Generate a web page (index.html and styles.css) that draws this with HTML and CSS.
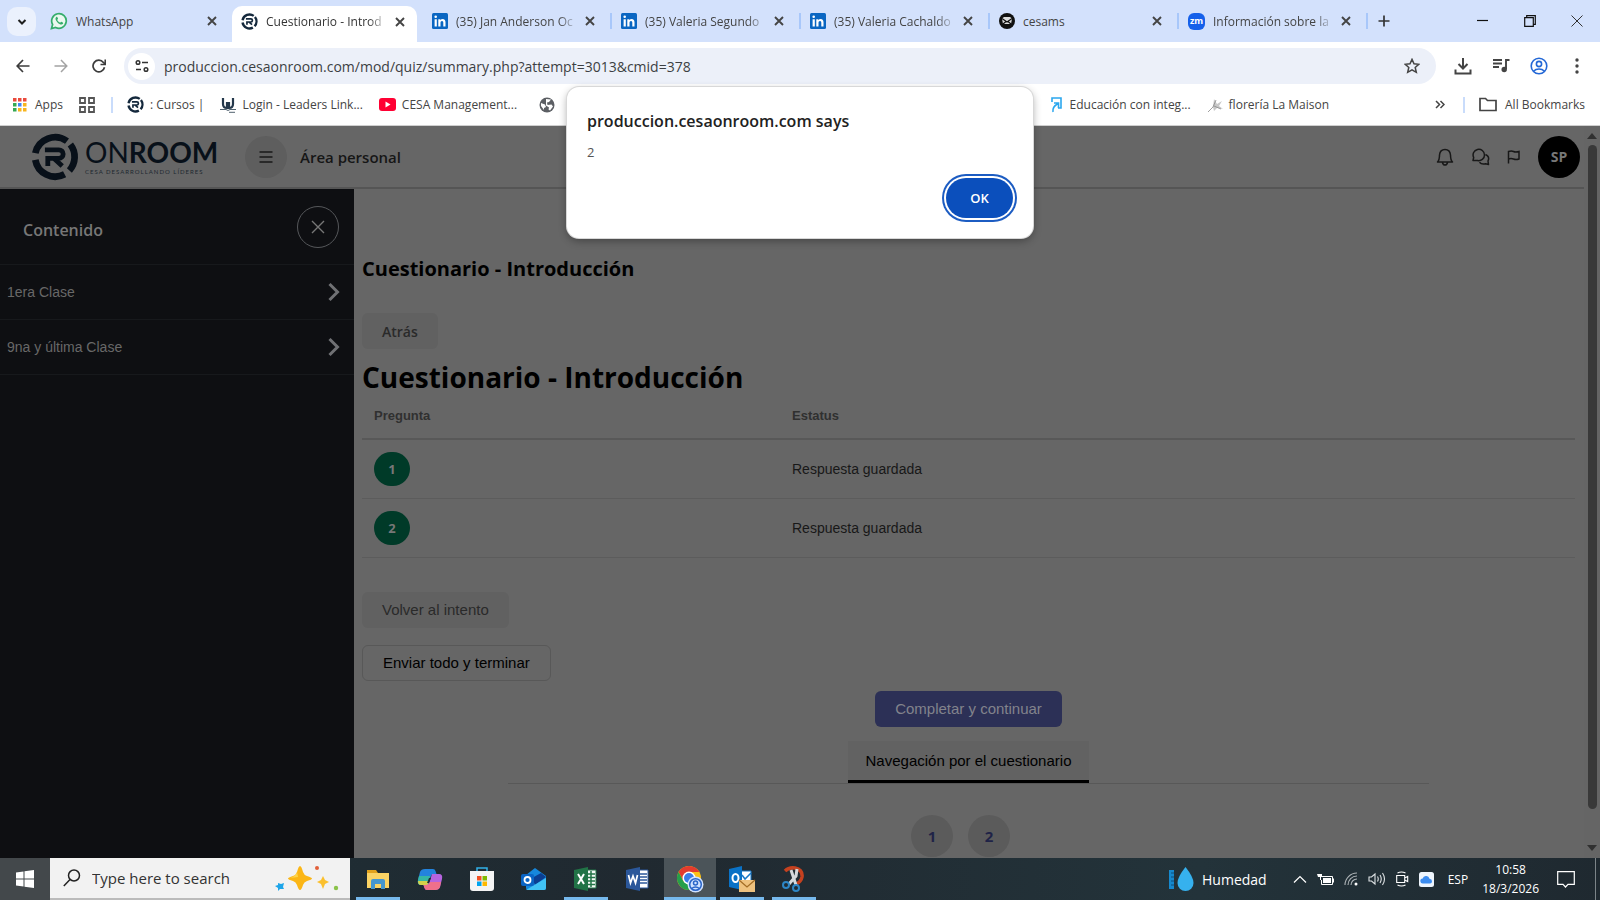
FILE: index.html
```html
<!DOCTYPE html>
<html lang="es">
<head>
<meta charset="utf-8">
<title>Cuestionario - Introducción</title>
<link rel="stylesheet" href="styles.css">
</head>
<body>
<svg class="defs" aria-hidden="true">
  <symbol id="close" viewBox="0 0 16 16"><path d="M4 4l8 8M12 4l-8 8" fill="none" stroke="currentColor" stroke-width="1.9"/></symbol>
  <symbol id="linkedin" viewBox="0 0 16 16"><rect width="16" height="16" rx="1.5" fill="#0a66c2"/><path d="M2.6 6.2h2.2v7.2H2.6zM3.7 2.4a1.3 1.3 0 1 1 0 2.6 1.3 1.3 0 0 1 0-2.6zM6.3 6.2h2.1v1c.5-.8 1.2-1.2 2.2-1.2 2.100 0 2.900 1.300 2.900 3.300v4.100h-2.200V9.700c0-1-.3-1.800-1.300-1.800s-1.500.7-1.500 1.800v3.700H6.300z" fill="#fff"/></symbol>
  <symbol id="onroom" viewBox="0 0 50 50"><g fill="none" stroke="currentColor"><path d="M4.500 21A21 21 0 0 1 37.500 8.500" stroke-width="7"/><path d="M4.500 28A21 21 0 0 0 35 43" stroke-width="7"/><path d="M41 12A21 21 0 0 1 40 39" stroke-width="7"/><path d="M14.500 17.500H29a4.500 4.500 0 0 1 0 9H17.500v8M24 26.500l8.500 8" stroke-width="5"/></g></symbol>
  <symbol id="chevron" viewBox="0 0 14 20"><path d="M2.500 2l8 8-8 8" fill="none" stroke="currentColor" stroke-width="3"/></symbol>
</svg>

<div class="screen">
  <header class="browser">
    <div class="tabstrip">
      <button class="tab-search" aria-label="Search tabs"><svg width="12" height="12" viewBox="0 0 12 12"><path d="M2.500 4l3.500 3.500L9.500 4" fill="none" stroke="#1f1f1f" stroke-width="2"/></svg></button>
      <div class="tab first">
        <svg width="18" height="18" viewBox="0 0 18 18"><path d="M1.500 16.500l1.100-4A7.300 7.300 0 1 1 5.600 15.400z" fill="#eaf8ef" stroke="#35ad6c" stroke-width="1.700"/><path d="M6.300 4.900c-1.500 1-.9 3.300 1.200 5.500 2.200 2.200 4.400 2.800 5.500 1.300.5-.8 0-1.200-1.600-1.900-.6-.2-.8.9-1.300.8C9 10.300 7.500 8.800 7.300 7.900c-.1-.4.900-.7.700-1.300-.6-1.600-1-2.100-1.700-1.700z" fill="#35ad6c"/></svg>
        <span class="tab-title">WhatsApp</span><button class="tab-close" aria-label="Close"><svg width="16" height="16"><use href="#close"/></svg></button>
      </div>
      <div class="tab active">
        <svg class="navy" width="17" height="17"><use href="#onroom"/></svg>
        <span class="tab-title faded">Cuestionario - Introd</span><button class="tab-close" aria-label="Close"><svg width="16" height="16"><use href="#close"/></svg></button>
      </div>
      <div class="tab"><svg width="16" height="16"><use href="#linkedin"/></svg><span class="tab-title faded">(35) Jan Anderson Oc</span><button class="tab-close" aria-label="Close"><svg width="16" height="16"><use href="#close"/></svg></button></div>
      <div class="tab sep"><svg width="16" height="16"><use href="#linkedin"/></svg><span class="tab-title faded">(35) Valeria Segundo</span><button class="tab-close" aria-label="Close"><svg width="16" height="16"><use href="#close"/></svg></button></div>
      <div class="tab sep"><svg width="16" height="16"><use href="#linkedin"/></svg><span class="tab-title faded">(35) Valeria Cachaldo</span><button class="tab-close" aria-label="Close"><svg width="16" height="16"><use href="#close"/></svg></button></div>
      <div class="tab sep">
        <svg width="16" height="16" viewBox="0 0 16 16"><circle cx="8" cy="8" r="8" fill="#111"/><path d="M3 5.500l2-1.500h6l2 1.500-1 5.500H4z" fill="#ddd"/><path d="M3 5.500l5 3.500 5-3.500M4 11l3-2.500M12 11L9 8.500" stroke="#111" fill="none" stroke-width="1.200"/></svg>
        <span class="tab-title">cesams</span><button class="tab-close" aria-label="Close"><svg width="16" height="16"><use href="#close"/></svg></button>
      </div>
      <div class="tab sep">
        <span class="zoom-icon">zm</span>
        <span class="tab-title faded">Información sobre la</span><button class="tab-close" aria-label="Close"><svg width="16" height="16"><use href="#close"/></svg></button>
      </div>
      <button class="new-tab sep" aria-label="New tab"><svg width="12" height="12" viewBox="0 0 12 12"><path d="M6 .5v11M.5 6h11" stroke="#333" stroke-width="1.700"/></svg></button>
      <div class="window-controls">
        <button aria-label="Minimize"><svg width="12" height="12" viewBox="0 0 12 12"><path d="M0 5.500h11" stroke="#111" stroke-width="1.200"/></svg></button>
        <button aria-label="Restore"><svg width="12" height="12" viewBox="0 0 12 12"><path d="M.7 2.700h8.600v8.600H.7zM2.700 2.700v-2h8.600v8.600h-2" fill="none" stroke="#111" stroke-width="1.200"/></svg></button>
        <button aria-label="Close window"><svg width="12" height="12" viewBox="0 0 12 12"><path d="M.5.500l11 11M11.500.500l-11 11" stroke="#333" stroke-width="1"/></svg></button>
      </div>
    </div>

    <div class="toolbar">
      <button class="tool" aria-label="Back"><svg width="14" height="14" viewBox="0 0 14 14"><path d="M13.500 7H1.500M7 1L1.200 7 7 13" fill="none" stroke="#3c3c3c" stroke-width="1.700"/></svg></button>
      <button class="tool" aria-label="Forward"><svg width="14" height="14" viewBox="0 0 14 14"><path d="M.5 7h12M7 1l5.800 6L7 13" fill="none" stroke="#a3a3a3" stroke-width="1.500"/></svg></button>
      <button class="tool" aria-label="Reload"><svg width="14" height="14" viewBox="0 0 14 14"><path d="M12.500 8.200A5.800 5.800 0 1 1 11.400 3.400L13 5" fill="none" stroke="#3c3c3c" stroke-width="1.700"/><path d="M13.300.5v5H8.500" fill="none" stroke="#3c3c3c" stroke-width="1.700"/></svg></button>
      <div class="omnibox">
        <button class="site-info" aria-label="Site information"><svg width="14" height="14" viewBox="0 0 14 14"><g fill="none" stroke="#333" stroke-width="1.500"><circle cx="3" cy="3.500" r="1.800"/><path d="M7 3.500h6M1 10.500h5"/><circle cx="11" cy="10.500" r="1.800"/></g></svg></button>
        <input class="url" type="text" aria-label="Address" value="produccion.cesaonroom.com/mod/quiz/summary.php?attempt=3013&amp;cmid=378">
        <button class="star" aria-label="Bookmark"><svg width="16" height="16" viewBox="0 0 16 16"><path d="M8 1.400l2 4.400 4.800.5-3.600 3.200 1.100 4.800L8 11.800l-4.300 2.500 1.100-4.800L1.200 6.300 6 5.800z" fill="none" stroke="#444" stroke-width="1.500"/></svg></button>
      </div>
      <div class="tool-icons">
        <button class="tool" aria-label="Downloads"><svg width="18" height="18" viewBox="0 0 18 18"><path d="M9 1v10M4.500 7L9 11.500 13.500 7M1.500 12.500v4h15v-4" fill="none" stroke="#444" stroke-width="2"/></svg></button>
        <button class="tool" aria-label="Media"><svg width="18" height="18" viewBox="0 0 18 18"><path d="M1 3h9M1 6.500h9M1 10h6M14 12V3h3.500" fill="none" stroke="#444" stroke-width="1.900"/><circle cx="12.200" cy="12.500" r="2.700" fill="#444"/></svg></button>
        <button class="tool" aria-label="Profile"><svg width="18" height="18" viewBox="0 0 18 18"><g fill="none" stroke="#2468d6" stroke-width="1.600"><circle cx="9" cy="9" r="7.800"/><circle cx="9" cy="7" r="2.600"/><path d="M3.500 14.300c3-3 8-3 11 0"/></g></svg></button>
        <button class="tool" aria-label="Menu"><svg width="4" height="16" viewBox="0 0 4 16" fill="#444"><circle cx="2" cy="2" r="1.700"/><circle cx="2" cy="8" r="1.700"/><circle cx="2" cy="14" r="1.700"/></svg></button>
      </div>
    </div>

    <nav class="bookmarks">
      <div class="marks-left">
        <a href="#" class="mark"><svg width="14" height="14" viewBox="0 0 14 14"><path d="M0 0h3.500v3.500H0zM5 0h3.500v3.500H5zM10 0h3.500v3.500H10z" fill="#ea4a3c"/><path d="M0 5h3.500v3.500H0zM0 10h3.500v3.500H0z" fill="#35a853"/><path d="M5 5h3.500v3.500H5z" fill="#4286f4"/><path d="M10 5h3.500v3.500H10zM5 10h3.500v3.500H5zM10 10h3.500v3.500H10z" fill="#f8b51e"/></svg>Apps</a>
        <button class="grid" aria-label="Tab groups"><svg width="16" height="16" viewBox="0 0 16 16"><path d="M1 1h5v5H1zM10 1h5v5h-5zM1 10h5v5H1zM10 10h5v5h-5z" fill="none" stroke="#555" stroke-width="1.800"/></svg></button>
        <span class="divider"></span>
        <a href="#" class="mark tight"><svg class="navy" width="17" height="17"><use href="#onroom"/></svg>: Cursos |</a>
        <a href="#" class="mark tight"><svg width="16" height="16" viewBox="0 0 16 16"><path d="M3 1v6q0 4 4 4V5M13 1v6q0 4-4 4V5" fill="none" stroke="#24384b" stroke-width="2.200"/><path d="M0 12.500h6l2 1 2-1h6M9 15.300h6" fill="none" stroke="#50626f"/></svg>Login - Leaders Link...</a>
        <a href="#" class="mark tight"><svg width="17" height="13" viewBox="0 0 17 13"><rect width="17" height="13" rx="3" fill="#f03"/><path d="M6.500 3.500l5 3-5 3z" fill="#fff"/></svg>CESA Management...</a>
        <a href="#" class="mark globe" aria-label="Web"><svg width="16" height="16" viewBox="0 0 16 16"><circle cx="8" cy="8" r="7.500" fill="#5c5f64"/><path d="M2 6l4 1.500 1 2.500-2 1v2L2 9zM7 2l5 .5L10 5 8 5.500 8.500 8l4-.5 1.500 2-3 4-1.500-1 .5-2-3-2" fill="#fff"/></svg></a>
      </div>
      <a href="#" class="mark"><svg width="11" height="16" viewBox="0 0 11 16"><path d="M1 5V1h9v10H7M2 15Q1 10 7 6.500M3 6h4.500v5" fill="none" stroke="#2ba7ee" stroke-width="1.600"/></svg>Educación con integ...</a>
      <a href="#" class="mark tight"><svg width="16" height="16" viewBox="0 0 16 16"><path d="M0 15l6-5 1-8 3 5 5-3-3 5 4 3-6-1-3 3-1-4z" fill="#c8c8c8"/><path d="M1 15q6-4 8-12M7 9l7 3" fill="none" stroke="#888" stroke-width=".8"/></svg>florería La Maison</a>
      <div class="marks-right">
        <button class="more" aria-label="More bookmarks"><svg width="10" height="9" viewBox="0 0 10 9"><path d="M1 1l3.500 3.500L1 8M5.500 1L9 4.500 5.500 8" fill="none" stroke="#444" stroke-width="1.500"/></svg></button>
        <span class="divider"></span>
        <a href="#" class="mark"><svg width="18" height="15" viewBox="0 0 18 15"><path d="M1 13.500V1.500h5.500l2 2H17v10z" fill="none" stroke="#444" stroke-width="1.700"/></svg>All Bookmarks</a>
      </div>
    </nav>
  </header>

  <div class="viewport">
    <div class="page">
      <header class="site-header">
        <a href="#" class="logo" aria-label="ONROOM">
          <svg width="50" height="48"><use href="#onroom"/></svg>
          <span class="wordmark"><span class="brand">ON<b>ROOM</b></span><span class="motto">CESA DESARROLLANDO LÍDERES</span></span>
        </a>
        <button class="burger" aria-label="Menú"><svg width="14" height="14" viewBox="0 0 14 14"><path d="M.5 2h13M.5 7h13M.5 12h13" stroke="#181818" stroke-width="1.500"/></svg></button>
        <a href="#" class="personal">Área personal</a>
        <div class="user-tools">
          <button aria-label="Notificaciones"><svg width="18" height="18" viewBox="0 0 18 18"><path d="M1.500 14h15q-2-2-2-7Q14 1.500 9 1.500T3.500 7q0 5-2 7zM6.500 14.500q.5 2.500 2.500 2.500t2.500-2.500" fill="none" stroke="#181818" stroke-width="1.500" stroke-linejoin="round"/></svg></button>
          <button aria-label="Mensajes"><svg width="19" height="18" viewBox="0 0 19 18"><path d="M2 12.500l.7-3A5.700 5.700 0 1 1 6.500 12.500zM14.500 6.500q4.500 2 2.500 6.500l.5 3.500-3-.7q-4 1-6-1.500" fill="none" stroke="#181818" stroke-width="1.500" stroke-linejoin="round"/></svg></button>
          <button aria-label="Marcador"><svg width="14" height="14" viewBox="0 0 14 14"><path d="M1.500 13.500v-12q3-1 5 0t5.500 0v7.500q-3 1-5.500 0t-5 0" fill="none" stroke="#181818" stroke-width="1.500"/></svg></button>
          <button class="avatar">SP</button>
        </div>
      </header>
      <div class="columns">
        <aside class="sidebar">
          <div class="side-head"><h3>Contenido</h3><button aria-label="Cerrar"><svg width="14" height="14" viewBox="0 0 14 14"><path d="M1 1l12 12M13 1L1 13" stroke="currentColor" stroke-width="1.400"/></svg></button></div>
          <a href="#" class="side-item">1era Clase<svg width="14" height="20"><use href="#chevron"/></svg></a>
          <a href="#" class="side-item">9na y última Clase<svg width="14" height="20"><use href="#chevron"/></svg></a>
        </aside>
        <main class="content">
          <h2>Cuestionario - Introducción</h2>
          <button class="btn soft back">Atrás</button>
          <h1>Cuestionario - Introducción</h1>
          <table class="summary">
            <thead><tr><th>Pregunta</th><th>Estatus</th></tr></thead>
            <tbody>
              <tr><td><span class="badge">1</span></td><td>Respuesta guardada</td></tr>
              <tr><td><span class="badge">2</span></td><td>Respuesta guardada</td></tr>
            </tbody>
          </table>
          <div class="actions">
            <button class="btn soft">Volver al intento</button>
            <button class="btn outline">Enviar todo y terminar</button>
          </div>
          <div class="finish">
            <button class="btn primary">Completar y continuar</button>
            <div class="quiz-tabs"><button class="quiz-tab">Navegación por el cuestionario</button></div>
            <div class="quiz-nav"><a href="#">1</a><a href="#">2</a></div>
          </div>
        </main>
      </div>
    </div>
    <div class="scrollbar">
      <svg width="10" height="6" viewBox="0 0 10 6"><path d="M0 6l5-6 5 6z" fill="#303030"/></svg>
      <span class="thumb"></span>
      <svg width="10" height="6" viewBox="0 0 10 6"><path d="M0 0l5 6 5-6z" fill="#303030"/></svg>
    </div>
  </div>

  <footer class="taskbar">
    <button class="start" aria-label="Start"><svg width="18" height="18" viewBox="0 0 18 18"><path d="M0 2.500l7.500-1v7H0zM8.500 1.300L18 0v8.500H8.500zM0 9.500h7.500v7l-7.500-1zM8.500 9.500H18V18l-9.500-1.300z" fill="#fff"/></svg></button>
    <label class="search">
      <svg width="18" height="18" viewBox="0 0 18 18"><circle cx="11" cy="6.500" r="5.500" fill="none" stroke="#222" stroke-width="1.500"/><path d="M7 10.500L.8 17" stroke="#222" stroke-width="1.500"/></svg>
      <input type="text" placeholder="Type here to search" aria-label="Search">
      <svg width="64" height="26" viewBox="0 0 64 26"><path d="M25 1q1.500 0 3 6 1 3 4 4 5 1.500 5 2.500t-5 2.500q-3 1-4 4-1.500 5-3 5t-3-5q-1-3-4-4-5-1.500-5-2.500t5-2.500q3-1 4-4 1.500-6 3-6z" fill="#fbb616"/><path d="M22 7q-1 4-7 6l8-1z" fill="#ffd54a"/><path d="M48 11l2 4 4 2-4 2-2 5-2-5-4-2 4-2z" fill="#fbc02d"/><path d="M3 18l3 1 3-1-1 4 1 2-4 0-2 2 0-3-3-2 3-1z" fill="#1ea5e9"/><circle cx="42" cy="3" r="2" fill="#e2603a"/><circle cx="61" cy="23" r="2.200" fill="#8bc34a"/></svg>
    </label>
    <div class="apps">
      <button class="app open" aria-label="Explorer"><svg width="26" height="26" viewBox="0 0 26 26"><path d="M2 4h9l2 3H2z" fill="#e2a21c"/><path d="M2 7h22v15H2z" fill="#fbd364"/><path d="M6 23v-8q0-2 2-2h10q2 0 2 2v8h-4v-5h-6v5z" fill="#4596cf"/></svg></button>
      <button class="app" aria-label="Copilot"><svg width="26" height="26" viewBox="0 0 26 26"><path d="M8 3h8q2 0 2.500 2l1 3h-3q-2 0-3 3l-2.500 8H4q-4 0-3-5l2-8q1-3 5-3z" fill="#2383dd"/><path d="M2 10h11l-2 9H4q-4 0-3-5z" fill="#35b6a4"/><path d="M1 15h11l-1 4H4q-3 0-3-4z" fill="#d5d04a"/><path d="M18 24h-8q-2 0-2.500-2l-1-3h3q2 0 3-3L15 8h7q4 0 3 5l-2 8q-1 3-5 3z" fill="#b764e0"/><path d="M24 16H13q-1 3-3.500 3h-3l1 3q.5 2 2.500 2h8q4 0 5-3z" fill="#f0708b"/><path d="M12 12l2 0-2 5h-2z" fill="#202a31"/></svg></button>
      <button class="app" aria-label="Store"><svg width="26" height="26" viewBox="0 0 26 26"><path d="M8 6V2h10v4" fill="none" stroke="#32b1e8" stroke-width="1.500"/><path d="M1 5h24v17q0 3-3 3H4q-3 0-3-3z" fill="#f4f4f4"/><path d="M8 10h4.500v4.500H8z" fill="#f25022"/><path d="M13.500 10H18v4.500h-4.500z" fill="#7fba00"/><path d="M8 15.500h4.500V20H8z" fill="#00a4ef"/><path d="M13.500 15.500H18V20h-4.500z" fill="#ffb900"/></svg></button>
      <button class="app" aria-label="Outlook"><svg width="26" height="26" viewBox="0 0 26 26"><path d="M5 9l9-7 11 8v12q0 2-2 2H7q-2 0-2-2z" fill="#1687dc"/><path d="M11 12l9-5 5 4-11 8z" fill="#0b3e91"/><path d="M5 24l20-12v10q0 2-2 2z" fill="#41c2f4"/><rect y="8" width="13" height="12" rx="2" fill="#0a64c4"/><circle cx="6.500" cy="14" r="3" fill="none" stroke="#fff" stroke-width="1.800"/></svg></button>
      <button class="app open" aria-label="Excel"><svg width="26" height="26" viewBox="0 0 26 26"><path d="M13 4h10v18H13z" fill="#f4f8f5" stroke="#217346"/><path d="M14 8h8M14 11.500h8M14 15h8M14 18.500h8M18 5v16" stroke="#217346" stroke-width="1.500"/><path d="M1 4l14-3v24L1 22z" fill="#217346"/><path d="M5 8l6 10M11 8L5 18" stroke="#fff" stroke-width="2"/></svg></button>
      <button class="app" aria-label="Word"><svg width="26" height="26" viewBox="0 0 26 26"><path d="M13 4h10v18H13z" fill="#fff" stroke="#2b579a"/><path d="M15 8h7M15 11h7M15 14h7M15 17h7" stroke="#2b579a" stroke-width="1.300"/><path d="M1 4l14-3v24L1 22z" fill="#2b579a"/><path d="M3.500 9l2 8L8 10l2.500 7 2-8" fill="none" stroke="#fff" stroke-width="1.700"/></svg></button>
      <button class="app open current" aria-label="Chrome"><svg width="28" height="28" viewBox="0 0 28 28"><circle cx="13" cy="13" r="12" fill="#fbc116"/><path d="M2.600 7A12 12 0 0 1 23.400 7H13l-5.500 9z" fill="#e33b2e"/><path d="M2.600 7A12 12 0 0 0 13 25l5-9-10.500.5z" fill="#269e4b"/><circle cx="13" cy="13" r="6.500" fill="#fff"/><circle cx="13" cy="13" r="5" fill="#3b7de9"/><circle cx="19.500" cy="19.500" r="8" fill="#d0e2ff"/><g fill="none" stroke="#2864c8" stroke-width="1.500"><circle cx="19.500" cy="19.500" r="5.800"/><circle cx="19.500" cy="18" r="2"/><path d="M15.500 23.500q4-3 8 0"/></g></svg></button>
      <button class="app open" aria-label="Outlook classic"><svg width="28" height="28" viewBox="0 0 28 28"><path d="M12 6h11v13H12z" fill="#fff" stroke="#1678c8"/><path d="M14 10l3 4 6-6" fill="none" stroke="#1678c8" stroke-width="1.500"/><path d="M1 4l13-3v24L1 22z" fill="#0a72c6"/><ellipse cx="7.500" cy="13" rx="3" ry="4" fill="none" stroke="#fff" stroke-width="2"/><path d="M11 15h16v12H11z" fill="#eec27f"/><path d="M11 15l8 7 8-7" fill="none" stroke="#a36d26" stroke-width="1.300"/></svg></button>
      <button class="app open" aria-label="Snipping Tool"><svg width="26" height="26" viewBox="0 0 26 26"><path d="M4 5Q8 1 14 2q8 2 7 9-1 5-6 7" fill="none" stroke="#c5411f" stroke-width="3.500"/><path d="M10 4l5 15M16 3l-1 7-7 8" fill="none" stroke="#d5d9dc" stroke-width="3"/><circle cx="5" cy="19" r="3" fill="none" stroke="#2d86c6" stroke-width="2"/><circle cx="15" cy="22" r="3" fill="none" stroke="#2d86c6" stroke-width="2"/></svg></button>
    </div>
    <div class="tray">
      <button class="weather"><svg width="26" height="26" viewBox="0 0 26 26"><path d="M1 4h5v19H1z" fill="#1689ce"/><path d="M3 7h3M3 11h3M3 15h3M3 19h3" stroke="#0c4e7c"/><path d="M17.500 1q8 10 8 16a8 8 0 0 1-16 0q0-6 8-16z" fill="#36b1ee"/></svg>Humedad</button>
      <svg width="14" height="8" viewBox="0 0 14 8"><path d="M1 7.500l6-6 6 6" fill="none" stroke="#fff" stroke-width="1.200"/></svg>
      <svg width="17" height="13" viewBox="0 0 17 13"><path d="M4 3.500h11.500v8H4.500V7" fill="none" stroke="#fff"/><path d="M6 5h8v5H6zM15.500 5.500H17v4h-1.500zM0 1h5v3H4v3H3V4H1z" fill="#fff"/></svg>
      <svg width="14" height="14" viewBox="0 0 14 14"><g fill="none" stroke="#aeb4b7" stroke-width="1.100"><path d="M1 13A12 12 0 0 1 13 1M4 13a9 9 0 0 1 9-9M7 13a6 6 0 0 1 6-6"/></g><circle cx="12" cy="12" r="1.500" fill="#fff"/></svg>
      <svg width="18" height="14" viewBox="0 0 18 14"><path d="M1 5h2.500L7 2v10L3.500 9H1zM9.500 4.500q1.500 2.500 0 5M12 3q2.500 4 0 8M14.500 1q4 6 0 12" fill="none" stroke="#dfe3e5" stroke-width="1.100"/></svg>
      <svg width="13" height="16" viewBox="0 0 13 16"><path d="M.7 4.500h8v7h-8zM8.700 7l3-1.500v5L8.700 9M1.500 2q4-2 8 0M1.500 14q4 2 8 0" fill="none" stroke="#fff" stroke-width="1.100"/></svg>
      <svg width="15" height="15" viewBox="0 0 15 15"><rect width="15" height="15" rx="2.500" fill="#eef5fd"/><path d="M4 11.500a2.500 2.500 0 0 1-.3-5Q4.500 3.500 7.500 4q2.300.3 3 2.700 2.500.3 2.500 2.500t-2 2.300z" fill="#3b8cf0"/></svg>
      <span class="lang">ESP</span>
      <time class="clock"><span>10:58</span><span>18/3/2026</span></time>
      <button class="notify" aria-label="Notifications"><svg width="18" height="17" viewBox="0 0 18 17"><path d="M.7.700h16.600v12.600H11L8.500 16l-2.500-2.700H.7z" fill="none" stroke="#fff" stroke-width="1.200"/></svg></button>
    </div>
  </footer>

  <div class="dialog" role="alertdialog" aria-labelledby="alert-title">
    <h2 id="alert-title">produccion.cesaonroom.com says</h2>
    <p>2</p>
    <button>OK</button>
  </div>
</div>
</body>
</html>
```
FILE: styles.css
```css
* { box-sizing: border-box; }
body { margin: 0; font-family: "Open Sans", "Noto Sans", sans-serif; }
button { border: 0; padding: 0; background: none; font: inherit; color: inherit; display: flex; align-items: center; justify-content: center; flex: none; }
a { color: inherit; text-decoration: none; }
svg { flex: none; display: block; }
.defs { position: absolute; width: 0; height: 0; }
.navy { color: #14283c; }
.screen { position: relative; height: 100vh; display: flex; flex-direction: column; overflow: hidden; background: #666; }

/* Browser chrome */
.browser { flex: none; background: #fff; border-bottom: 1px solid #cfcfcf; color: #444; }
.tabstrip { display: flex; height: 42px; padding-left: 7px; background: #d3e1fc; }
.tab-search { width: 29px; height: 29px; margin: 7px 6px 0 0; border-radius: 10px; background: #ebf1fd; }
.tab { position: relative; display: flex; align-items: center; flex: 0 1 189px; min-width: 0; padding: 0 12px 0 11px; font-size: 12px; }
.tab.first { padding-left: 8px; flex-basis: 190px; }
.tab-title { flex: 1; min-width: 0; margin: 0 4px 0 8px; white-space: nowrap; }
.faded { -webkit-mask-image: linear-gradient(90deg, #000 84%, transparent); mask-image: linear-gradient(90deg, #000 84%, transparent); }
.tab-close { width: 16px; height: 16px; color: #444; }
.tab.active { margin: 6px 4px 0 0; padding: 0 9px 5px; border-radius: 10px 10px 0 0; background: #fff; flex-basis: 185px; color: #333; }
.sep::before { content: ""; position: absolute; left: 0; top: 13px; width: 2px; height: 16px; background: #a8c7fa; }
.zoom-icon { width: 17px; height: 17px; border-radius: 6px; background: #1560ea; color: #fff; font-size: 9px; font-weight: 700; line-height: 15px; text-align: center; }
.new-tab { position: relative; width: 36px; }
.window-controls { display: flex; margin-left: auto; }
.window-controls button { width: 47px; }
.toolbar { display: flex; align-items: center; height: 48px; padding: 0 4px; }
.tool { width: 38px; height: 34px; }
.omnibox { flex: 1; display: flex; align-items: center; height: 36px; margin: 0 8px 0 6px; padding: 0 14px 0 4px; border-radius: 18px; background: #ecf0f9; }
.site-info { width: 27px; height: 27px; border-radius: 50%; background: #fff; }
.url { flex: 1; min-width: 0; border: 0; padding: 0 0 0 9px; background: none; font: 14px "Open Sans", sans-serif; color: #3c3f43; outline: 0; }
.tool-icons { display: flex; }
.toolbar .star { width: 20px; height: 20px; }
.bookmarks { display: flex; align-items: center; height: 35px; padding: 0 15px 6px 13px; font-size: 12px; white-space: nowrap; }
.marks-left { display: flex; align-items: center; flex: 0 0 66%; }
.mark { display: flex; align-items: center; gap: 8px; margin-right: 16px; }
.mark.tight { gap: 6px; }
.globe { margin-left: 6px; }
.grid { margin-right: 16px; }
.divider { width: 2px; height: 16px; margin-right: 14px; background: #c9dcfb; }
.marks-right { display: flex; align-items: center; margin-left: auto; }
.marks-right .mark { margin-right: 0; }
.more { margin-right: 18px; }

/* Site header */
.viewport { flex: 1; min-height: 0; display: flex; background: #666; }
.page { flex: 1; min-width: 0; display: flex; flex-direction: column; overflow: hidden; }
.site-header { display: flex; align-items: center; flex: none; height: 63px; padding: 0 4px 0 30px; border-bottom: 2px solid #555; color: #161616; }
.logo { display: flex; align-items: center; gap: 5px; color: #081019; }
.wordmark { display: flex; flex-direction: column; gap: 2px; width: 131px; font-family: Lato, sans-serif; }
.brand { font-size: 28px; line-height: 28px; }
.brand b { font-weight: 700; }
.motto { font-size: 6px; line-height: 8px; letter-spacing: 1px; white-space: nowrap; color: #202830; }
.burger { width: 42px; height: 42px; margin-left: 29px; border-radius: 50%; background: #5e5e5e; }
.personal { margin-left: 13px; font-size: 15px; font-weight: 600; }
.user-tools { display: flex; align-items: center; gap: 17px; margin-left: auto; }
.user-tools .avatar { width: 42px; height: 42px; border-radius: 50%; background: #000; color: #777; font-size: 14px; font-weight: 700; }

/* Course index */
.columns { flex: 1; min-height: 0; display: flex; }
.sidebar { flex: none; width: 354px; background: #0e0f12; color: #777; }
.side-head { display: flex; align-items: center; justify-content: space-between; height: 76px; padding: 0 15px 0 23px; border-bottom: 1px solid #17191c; }
.side-head h3 { margin: 6px 0 0; font-size: 16px; font-weight: 600; }
.side-head button { width: 42px; height: 42px; border: 1px solid #55575a; border-radius: 50%; }
.side-item { display: flex; align-items: center; justify-content: space-between; height: 55px; padding: 0 13px 0 7px; border-bottom: 1px solid #17191c; font: 14px "Liberation Sans", Arial, sans-serif; color: #686868; }
.side-item svg { color: #707174; }

/* Quiz summary */
.content { flex: 1; min-width: 0; padding: 66px 9px 0 8px; font: 14px "Liberation Sans", Arial, sans-serif; color: #181818; }
.content h1, .content h2 { margin: 0; font-family: "Open Sans", "Noto Sans", sans-serif; font-weight: 700; color: #000; white-space: nowrap; }
.content h2 { font-size: 20px; line-height: 28px; }
.content h1 { margin-top: 10px; font-size: 28px; line-height: 36px; }
.btn { height: 36px; padding: 0 20px; border-radius: 6px; font: 15px "Liberation Sans", Arial, sans-serif; }
.soft { background: #616161; color: #2a2a2a; }
.outline { border: 1px solid #585858; color: #000; }
.primary { background: #2c3056; color: #82838c; }
.back { margin-top: 30px; font: 600 14px "Open Sans", sans-serif; }
.summary { width: 100%; border-collapse: collapse; table-layout: fixed; }
.summary th { height: 44px; padding: 0 12px 2px; border-bottom: 2px solid #585858; text-align: left; font-size: 13px; color: #303030; }
.summary th:first-child { width: 418px; }
.summary td { height: 59px; padding: 0 12px; border-bottom: 1px solid #5c5c5c; }
.badge { display: flex; align-items: center; justify-content: center; width: 36px; height: 34px; border-radius: 17px; background: #003a28; color: #777; font: 700 13px "Open Sans", sans-serif; }
.actions { display: flex; flex-direction: column; align-items: flex-start; gap: 17px; margin-top: 34px; }
.finish { display: flex; flex-direction: column; align-items: center; margin-top: 10px; }
.quiz-tabs { display: flex; justify-content: center; width: 76%; margin-top: 14px; border-bottom: 1px solid #585858; }
.quiz-tab { height: 42px; padding: 0 18px; border-bottom: 3px solid #000; background: #626262; font-size: 15px; color: #000; }
.quiz-nav { display: flex; gap: 15px; margin: 31px 16px 0 0; }
.quiz-nav a { display: flex; align-items: center; justify-content: center; width: 42px; height: 42px; border-radius: 50%; background: #5b5b5b; color: #1f2347; font: 700 15px "Open Sans", sans-serif; }
.scrollbar { flex: none; display: flex; flex-direction: column; align-items: center; width: 16px; padding: 7px 0; background: #656565; }
.thumb { width: 9px; height: 664px; margin: 6px 0 auto; border-radius: 5px; background: #393939; }

/* Taskbar */
.taskbar { flex: none; display: flex; height: 42px; background: linear-gradient(90deg, #1e3037, #202930 40%, #23333a 75%, #1f2930); color: #fff; }
.start { width: 50px; background: #43484b; }
.search { display: flex; align-items: center; width: 300px; padding: 0 11px 0 13px; border-bottom: 2px solid #bbb; background: #f2f2f2; }
.search input { flex: 1; min-width: 0; padding: 0 0 0 11px; border: 0; background: none; font: 15px "Open Sans", sans-serif; }
.search input::placeholder { color: #333; opacity: 1; }
.apps { display: flex; margin-left: 2px; }
.app { position: relative; width: 52px; }
.app.open::after { content: ""; position: absolute; left: 4px; right: 4px; bottom: 0; height: 3px; background: #76b9ed; }
.app.current { background: #4b5459; }
.app.current::after { left: 0; right: 0; }
.tray { display: flex; align-items: center; gap: 10px; margin: 0 4px 0 auto; padding-right: 20px; border-right: 1px solid #7c8488; }
.weather { gap: 8px; margin-right: 16px; font-size: 14px; }
.lang { margin-left: 4px; font-size: 12px; }
.clock { display: flex; flex-direction: column; align-items: center; margin-left: 4px; font-size: 12px; line-height: 19px; }
.notify { margin-left: 8px; }

/* Alert */
.dialog { position: absolute; top: 87px; left: 50%; width: 466px; margin-left: -233px; padding: 22px 20px; border-radius: 12px; background: #fff; box-shadow: 0 0 0 1px #d8d8d8, 0 3px 8px #0005; color: #222; }
.dialog h2 { margin: 0; font-size: 16px; line-height: 24px; font-weight: 600; }
.dialog p { margin: 9px 0 0; font-size: 13px; line-height: 20px; color: #555; }
.dialog button { width: 67px; height: 40px; margin: 16px 0 -2px auto; border-radius: 20px; background: #0b4fbc; color: #fff; font-size: 13px; font-weight: 600; box-shadow: 0 0 0 2px #fff, 0 0 0 4px #1c5cc2; }
```
